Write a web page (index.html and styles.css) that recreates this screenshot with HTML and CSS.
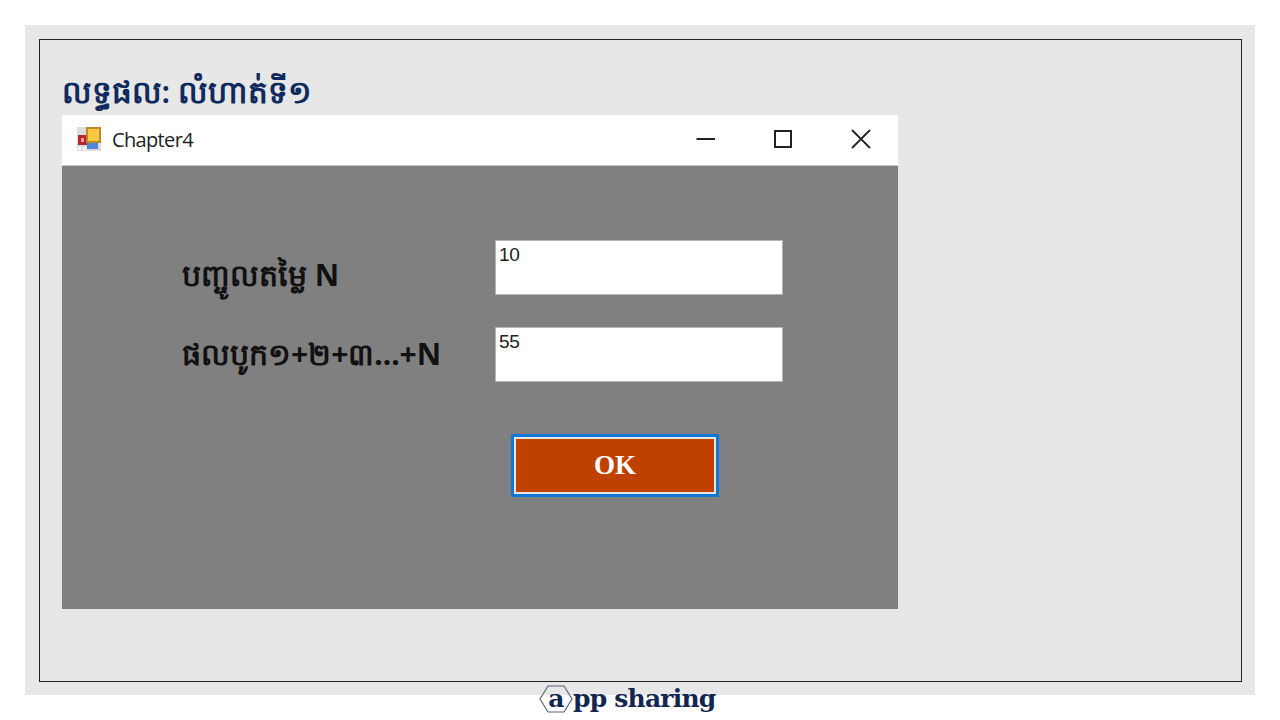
FILE: index.html
```html
<!DOCTYPE html>
<html lang="km">
<head>
    <meta charset="UTF-8">
    <meta name="viewport" content="width=device-width, initial-scale=1.0">
    <title>Chapter4</title>
    <link rel="stylesheet" href="styles.css">
</head>
<body>
    <div class="slide">
        <div class="frame">
            <h1 class="heading">លទ្ធផល: លំហាត់ទី១</h1>
            <div class="window">
                <div class="titlebar">
                    <svg class="app-icon" width="24" height="24" viewBox="0 0 24 24">
                        <rect x="0" y="0" width="24" height="24" fill="#dcdcdc"/>
                        <rect x="1" y="8" width="9" height="10" fill="#b3262a"/>
                        <rect x="4" y="11" width="3" height="4" fill="#eea0a0"/>
                        <rect x="9" y="0" width="15" height="16" fill="#b98a2c"/>
                        <rect x="11" y="2" width="11" height="12" fill="#fbc93f"/>
                        <rect x="10" y="16" width="11" height="6" fill="#4f86d6"/>
                        <rect x="1" y="20" width="3" height="3" fill="#fff"/>
                        <rect x="6" y="20" width="3" height="3" fill="#fff"/>
                    </svg>
                    <span class="title">Chapter4</span>
                    <div class="controls">
                        <svg width="20" height="20" viewBox="0 0 20 20"><path d="M0.5 10H19" stroke="#222" stroke-width="2" fill="none"/></svg>
                        <svg width="20" height="20" viewBox="0 0 20 20"><rect x="2" y="2" width="16" height="16" stroke="#222" stroke-width="2" fill="none"/></svg>
                        <svg class="close" width="20" height="20" viewBox="0 0 20 20"><path d="M1 1L19 19M19 1L1 19" stroke="#222" stroke-width="1.8" fill="none"/></svg>
                    </div>
                </div>
                <div class="client">
                    <div class="form-row">
                        <label class="field-label field-label-n">បញ្ចូលតម្លៃ N</label>
                        <div class="textbox">10</div>
                    </div>
                    <div class="form-row">
                        <label class="field-label">ផលបូក១+២+៣...+N</label>
                        <div class="textbox">55</div>
                    </div>
                    <button class="ok-btn">OK</button>
                </div>
            </div>
        </div>
    </div>
    <div class="brand">
        <span class="hex">
            <svg width="34" height="28" viewBox="0 0 34 28"><path d="M9 1H25L33 14L25 27H9L1 14Z" fill="none" stroke="#5a6478" stroke-width="1.2"/></svg>
            <span class="hex-letter">a</span>
        </span>
        <span>pp sharing</span>
    </div>
</body>
</html>
```

FILE: styles.css
```css
body {
    margin: 0;
    height: 720px;
    background: #fff;
    font-family: "Liberation Sans", Arial, sans-serif;
}
.slide {
    margin: 25px 25px 0;
    height: 670px;
    padding: 14px 13px 14px 14px;
    box-sizing: border-box;
    background: #e7e7e7;
}
.frame {
    height: 643px;
    box-sizing: border-box;
    border: 1px solid #222;
    padding: 30px 22px 0;
}
.heading {
    margin: 0;
    height: 45px;
    line-height: 42px;
    font-family: "Noto Sans", "DejaVu Sans", sans-serif;
    font-size: 31px;
    font-weight: 600;
    letter-spacing: -0.1px;
    color: #0f2a5c;
}
.window {
    width: 836px;
    height: 494px;
    display: flex;
    flex-direction: column;
}
.titlebar {
    height: 51px;
    box-sizing: border-box;
    display: flex;
    align-items: center;
    padding: 0 0 2px 15px;
    background: #fff;
    border-bottom: 1px solid #c8c8c8;
}
.title {
    margin-left: 11px;
    font-family: "Open Sans", sans-serif;
    font-size: 20px;
    letter-spacing: -0.65px;
    color: #222;
}
.controls {
    margin-left: auto;
    margin-right: 27px;
    display: flex;
    gap: 57px;
}
.controls .close {
    margin-left: 1px;
}
.client {
    flex: 1;
    background: #808080;
    padding: 74px 0 0 120px;
}
.form-row {
    display: flex;
    align-items: center;
    height: 55px;
    margin-bottom: 32px;
}
.field-label {
    width: 313px;
    padding-top: 4px;
    font-family: "Noto Sans", "DejaVu Sans", sans-serif;
    font-size: 30px;
    font-weight: bold;
    color: #111;
}
.field-label-n {
    padding-top: 20px;
}
.textbox {
    width: 288px;
    height: 55px;
    box-sizing: border-box;
    padding: 3px 3px;
    background: #fff;
    border: 1px solid #b5b5b5;
    font-size: 19px;
    letter-spacing: -0.4px;
    color: #222;
}
.ok-btn {
    display: block;
    width: 208px;
    height: 63px;
    margin: 52px 0 0 329px;
    box-sizing: border-box;
    background: #bf4100;
    border: 3px solid #0f78d4;
    box-shadow: inset 0 0 0 2px #e4e4e4;
    font-family: "Liberation Serif", serif;
    font-size: 27px;
    font-weight: bold;
    color: #fff;
}
.brand {
    margin-top: -14px;
    padding: 3px 0 0 539px;
    display: flex;
    font-family: "DejaVu Serif", serif;
    font-size: 25px;
    font-weight: bold;
    letter-spacing: -0.8px;
    color: #12264f;
}
.hex {
    width: 34px;
    display: flex;
    align-items: center;
    justify-content: center;
    position: relative;
}
.hex svg {
    position: absolute;
    left: 0;
    top: 1px;
}
```
